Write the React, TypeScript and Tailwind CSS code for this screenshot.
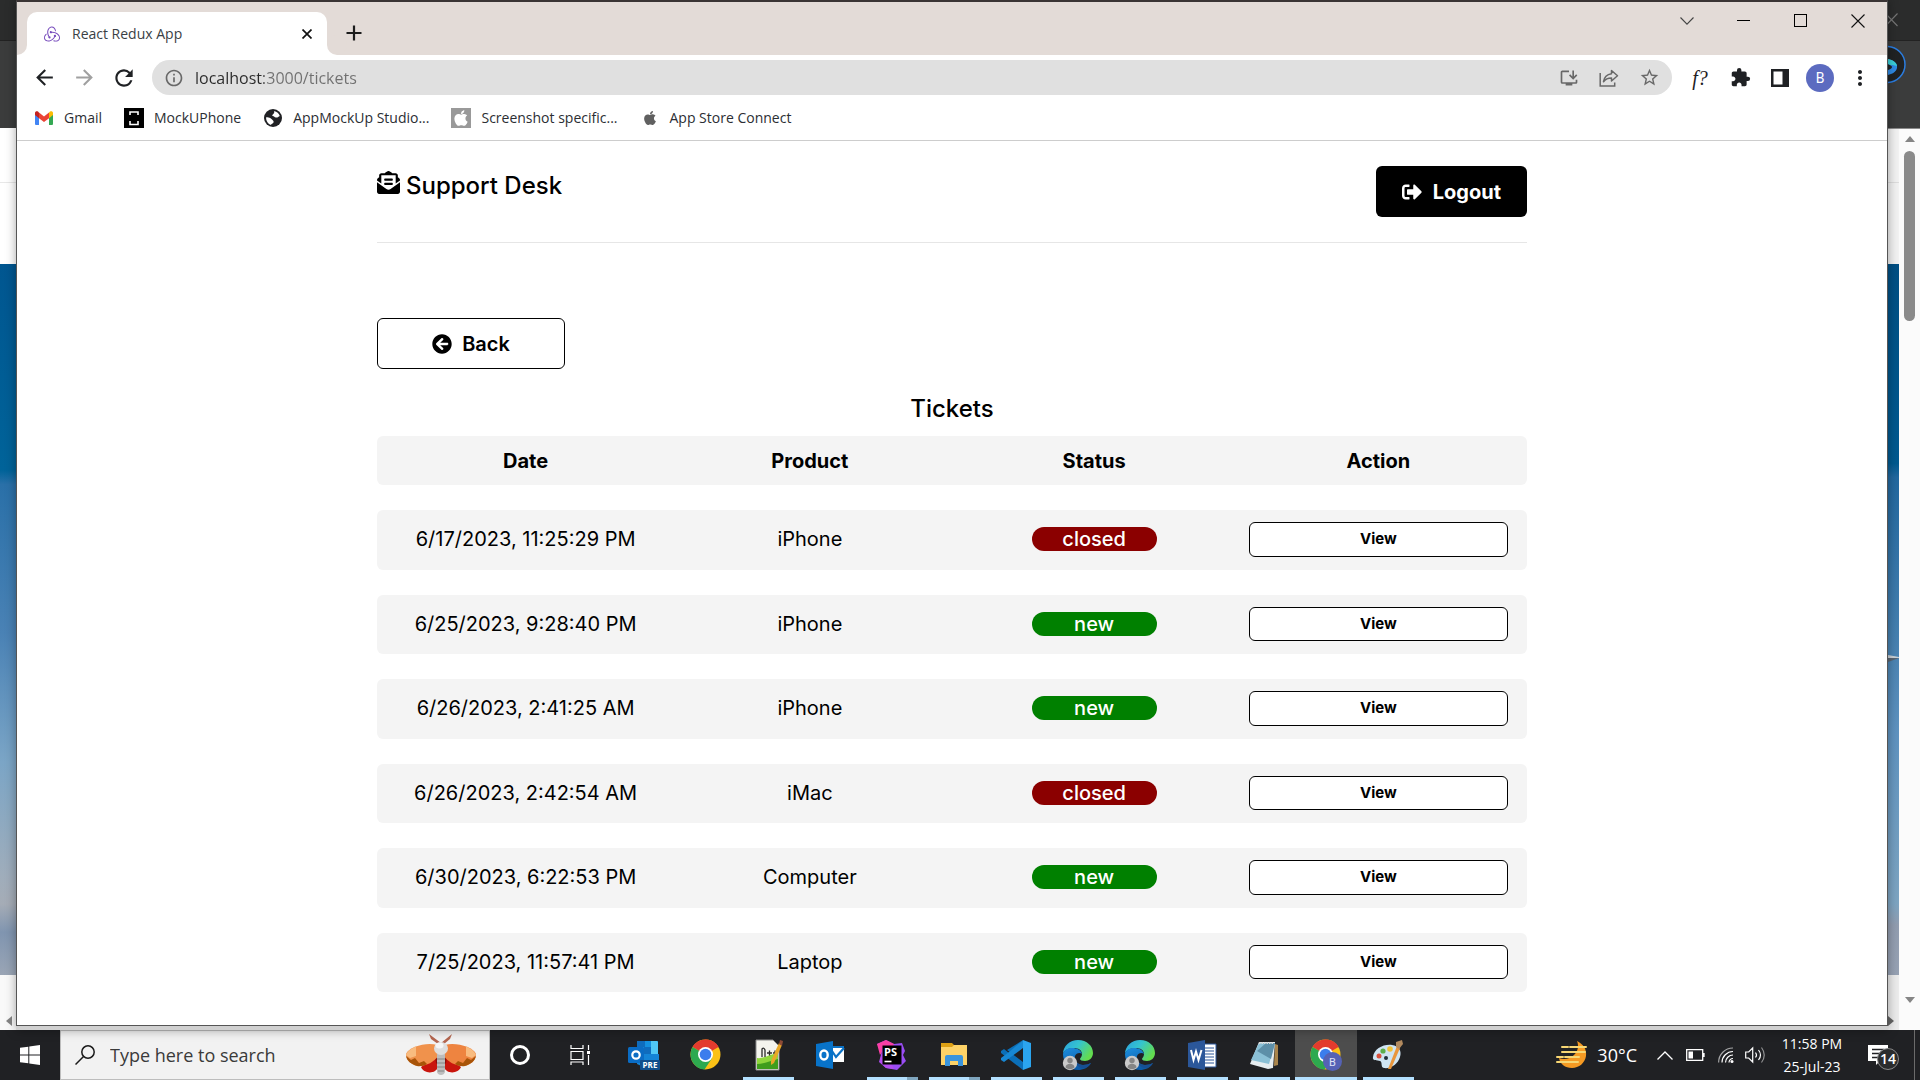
import React from "react";
import {
  FaApple,
  FaArrowCircleLeft,
  FaEnvelopeOpenText,
  FaSignOutAlt,
} from "react-icons/fa";
import {
  MdArrowBack,
  MdArrowForward,
  MdExtension,
  MdInfoOutline,
  MdInstallDesktop,
  MdMoreVert,
  MdRefresh,
  MdStarBorder,
} from "react-icons/md";
import { SiRedux } from "react-icons/si";

type Ticket = { date: string; product: string; status: "new" | "closed" };

const tickets: Ticket[] = [
  { date: "6/17/2023, 11:25:29 PM", product: "iPhone", status: "closed" },
  { date: "6/25/2023, 9:28:40 PM", product: "iPhone", status: "new" },
  { date: "6/26/2023, 2:41:25 AM", product: "iPhone", status: "new" },
  { date: "6/26/2023, 2:42:54 AM", product: "iMac", status: "closed" },
  { date: "6/30/2023, 6:22:53 PM", product: "Computer", status: "new" },
  { date: "7/25/2023, 11:57:41 PM", product: "Laptop", status: "new" },
];

/* ---------- Browser chrome ---------- */

function TabStrip() {
  return (
    <div className="flex h-[53px] items-start overflow-hidden bg-[#e3dbd7]">
      <div className="relative ml-[10px] mt-[10px] flex h-[43px] w-[300px] items-center rounded-t-[10px] bg-white pl-[17px] pr-[10px]">
        <span className="absolute -left-[10px] bottom-0 size-[10px] bg-white" />
        <span className="absolute -left-[20px] bottom-0 size-[20px] rounded-full bg-[#e3dbd7]" />
        <span className="absolute -right-[10px] bottom-0 size-[10px] bg-white" />
        <span className="absolute -right-[20px] bottom-0 size-[20px] rounded-full bg-[#e3dbd7]" />
        <SiRedux className="size-4 text-[#764abc]" />
        <span className="ml-3 flex-1 text-sm text-[#3a3f45]">React Redux App</span>
        <button aria-label="Close tab" className="flex size-5 items-center justify-center">
          <svg viewBox="0 0 10 10" className="size-[10px]" stroke="#111" strokeWidth="1.7">
            <path d="M.5.5l9 9M9.500.5l-9 9" />
          </svg>
        </button>
      </div>
      <button aria-label="New tab" className="ml-[17px] mt-[21px] flex size-5 items-center justify-center">
        <svg viewBox="0 0 16 16" className="size-4" stroke="#1c1c1c" strokeWidth="2.2">
          <path d="M8 0.500v15M.5 8h15" />
        </svg>
      </button>
      <div className="ml-auto mr-px flex h-[37px] text-black">
        <button aria-label="Search tabs" className="flex w-[57px] items-center justify-center">
          <svg viewBox="0 0 14 8" className="w-[14px]" fill="none" stroke="#444" strokeWidth="1.100">
            <path d="M.5.5L7 7.200 13.500.5" />
          </svg>
        </button>
        <button aria-label="Minimize" className="flex w-[57px] items-center justify-center">
          <span className="h-px w-[13px] bg-black" />
        </button>
        <button aria-label="Maximize" className="flex w-[57px] items-center justify-center">
          <span className="size-[13px] border border-black" />
        </button>
        <button aria-label="Close" className="flex w-[57px] items-center justify-center">
          <svg viewBox="0 0 14 14" className="size-[14px]" stroke="#111" strokeWidth="1.100">
            <path d="M.5.5l13 13M13.500.5l-13 13" />
          </svg>
        </button>
      </div>
    </div>
  );
}

function ShareIcon() {
  return (
    <svg viewBox="0 0 20 18" className="h-[18px] w-[20px]" fill="none" stroke="#686868" strokeWidth="1.500">
      <path d="M1.200 4v13h14.500v-3.500" />
      <path d="M12.500 1.500l6 5.300-6 5.200V8.900c-3.500 0-6 1-8 3.800.6-4.300 3.200-7.300 8-8z" strokeLinejoin="round" />
    </svg>
  );
}

function Toolbar() {
  const cell = "flex h-[45px] w-10 items-center justify-center";
  return (
    <div className="flex h-[45px] items-center bg-white px-[7px] text-[#1f2124]">
      <button aria-label="Back" className={cell}>
        <MdArrowBack className="size-[25px]" />
      </button>
      <button aria-label="Forward" className={cell}>
        <MdArrowForward className="size-[25px] text-[#a0a0a0]" />
      </button>
      <button aria-label="Reload" className={cell}>
        <MdRefresh className="size-[26px]" />
      </button>
      <div className="ml-2 flex h-[35px] flex-1 items-center rounded-full bg-[#e0e0e0] pl-[12px] pr-[3px] text-[#686868]">
        <MdInfoOutline className="size-5" />
        <input
          aria-label="Address"
          defaultValue="localhost:3000/tickets"
          className="ml-[11px] flex-1 bg-linear-to-r from-[#2a2a2a] from-[69px] to-[#707070] to-[69px] bg-clip-text text-base text-transparent outline-none"
        />
        <button aria-label="Install app" className={cell}>
          <MdInstallDesktop className="size-[20px]" />
        </button>
        <button aria-label="Share" className={cell}>
          <ShareIcon />
        </button>
        <button aria-label="Bookmark" className={cell}>
          <MdStarBorder className="size-[21px]" />
        </button>
      </div>
      <button className="ml-2 flex h-[45px] w-10 items-center justify-center font-['Liberation_Serif',serif] text-xl italic">
        f?
      </button>
      <button aria-label="Extensions" className={cell}>
        <MdExtension className="size-[21px]" />
      </button>
      <button aria-label="Side panel" className={cell}>
        <svg viewBox="0 0 18 18" className="size-[18px]">
          <path fillRule="evenodd" d="M0 0h18v18H0zM2.500 2.500v13h9v-13z" fill="#1f2124" />
        </svg>
      </button>
      <button aria-label="Profile" className={cell}>
        <span className="flex size-7 items-center justify-center rounded-full bg-[#5c6bc0] font-[Roboto,sans-serif] text-sm text-white">
          B
        </span>
      </button>
      <button aria-label="Menu" className={cell}>
        <MdMoreVert className="size-6" />
      </button>
    </div>
  );
}

function GmailIcon() {
  return (
    <svg viewBox="0 0 18 14" className="w-[18px]">
      <path d="M0 2v11a1 1 0 0 0 1 1h3V5z" fill="#4285f4" />
      <path d="M18 2v11a1 1 0 0 1-1 1h-3V5z" fill="#34a853" />
      <path d="M14 1.500l1-.9C16.200-.3 18 .4 18 2v2l-4 3.200z" fill="#fbbc04" />
      <path d="M4 1.500l-1-.9C1.800-.3 0 .4 0 2v2l4 3.200z" fill="#c5221f" />
      <path d="M4 1.500l5 3.900 5-3.900v5.700l-5 3.900-5-3.900z" fill="#ea4335" />
    </svg>
  );
}

function Bookmark({ icon, label }: { icon: React.ReactNode; label: string }) {
  return (
    <a href="#" className="flex items-center gap-[10px]">
      <span className="flex size-5 items-center justify-center">{icon}</span>
      <span>{label}</span>
    </a>
  );
}

function BookmarkBar() {
  return (
    <nav className="flex h-[41px] items-center gap-[22px] border-b border-[#cdcdcd] bg-white pb-1 pl-[17px] text-sm text-[#2b2e33]">
      <Bookmark icon={<GmailIcon />} label="Gmail" />
      <Bookmark
        icon={
          <svg viewBox="0 0 20 20" className="size-5">
            <path d="M0 0h20v20H0z" />
            <path d="M6 7V4h8v3M6 13v3.500h8V13" fill="none" stroke="#fff" strokeWidth="1.600" />
          </svg>
        }
        label="MockUPhone"
      />
      <Bookmark
        icon={
          <svg viewBox="0 0 18 18" className="size-[18px]">
            <circle cx="9" cy="9" r="9" fill="#202124" />
            <path d="M10 2c3 .5 5 2.500 5.800 5-1.500 1-2.300 1.800-3.800 1.500S9.500 7 8 6.500C9 5 11 4 10 2z" fill="#fff" />
            <path d="M2 8.500c2-.6 4 .2 5.500 1.500S10 12 9.500 13.500 7 14.500 7 16C4 15 2 12 2 8.500z" fill="#fff" />
          </svg>
        }
        label="AppMockUp Studio..."
      />
      <Bookmark
        icon={
          <span className="flex size-5 items-center justify-center bg-[#999]">
            <FaApple className="size-[18px] text-white" />
          </span>
        }
        label="Screenshot specific..."
      />
      <Bookmark icon={<FaApple className="size-4 text-[#606060]" />} label="App Store Connect" />
    </nav>
  );
}

/* ---------- Support Desk page ---------- */

function TicketsPage() {
  const row = "grid grid-cols-4 items-center gap-[25px] rounded-md bg-[#f4f4f4] px-[19px]";
  return (
    <div className="flex-1 bg-white px-6 pb-[33px] font-[Inter,sans-serif] text-black">
      <div className="mx-auto w-full max-w-[1150px]">
        <header className="flex items-start justify-between border-b border-[#e6e6e6] py-[25px]">
          <a href="#" className="flex items-start gap-[6px] text-2xl font-medium leading-10">
            <FaEnvelopeOpenText className="mt-[5px] size-[23px]" />
            Support Desk
          </a>
          <button className="flex h-[51px] items-center gap-[11px] rounded-md bg-black px-[26px] text-xl font-bold text-white">
            <FaSignOutAlt className="size-5" />
            Logout
          </button>
        </header>
        <main className="pt-[75px]">
          <button className="flex h-[51px] w-[188px] items-center justify-center gap-[10px] rounded-md border border-black text-xl font-semibold">
            <FaArrowCircleLeft className="size-5" />
            Back
          </button>
          <h1 className="mb-3 mt-[25px] text-center text-2xl font-medium leading-[30px]">Tickets</h1>
          <table className="block text-center text-xl">
            <thead className="block">
              <tr className={row + " h-[49px] font-semibold"}>
                <th scope="col">Date</th>
                <th scope="col">Product</th>
                <th scope="col">Status</th>
                <th scope="col">Action</th>
              </tr>
            </thead>
            <tbody className="flex flex-col gap-[25px] pt-[25px]">
              {tickets.map((t) => (
                <tr key={t.date} className={row + " pb-[13px] pt-3"}>
                  <td>{t.date}</td>
                  <td>{t.product}</td>
                  <td className="flex justify-center">
                    <span
                      className={
                        "w-[125px] rounded-full font-medium leading-6 text-white " +
                        (t.status === "new" ? "bg-[#008000]" : "bg-[#8b0000]")
                      }
                    >
                      {t.status}
                    </span>
                  </td>
                  <td>
                    <button className="block w-full rounded-md border border-black bg-white py-[5px] text-[15px] font-bold leading-normal">
                      View
                    </button>
                  </td>
                </tr>
              ))}
            </tbody>
          </table>
        </main>
      </div>
    </div>
  );
}

/* ---------- Windows behind the browser ---------- */

function LeftEdge() {
  return (
    <div className="flex w-4 flex-col bg-[#f9f9f9]">
      <div className="h-10 bg-[#2b2c2c]" />
      <div className="h-[88px] border-t border-[#222] bg-[#3b3c3c]" />
      <div className="h-[55px] border-b border-[#e8e8e8] bg-white" />
      <div className="h-[81px] bg-white" />
      <div className="flex-1 bg-[linear-gradient(#005690,#006399_29%,#2a70a8_31%,#4a82b5_52%,#7ba5c6_70%,#9fadbb_86%,#a5acb6_90%,#8095b0_94%,#9aa5b5)]" />
      <div className="flex h-[55px] items-end justify-end pb-[4px] pr-1">
        <svg viewBox="0 0 6 10" className="h-[10px] w-[6px]">
          <path d="M6 0v10L0 5z" fill="#858585" />
        </svg>
      </div>
    </div>
  );
}

function RightEdge() {
  return (
    <div className="flex w-8 flex-col bg-[#fbfbfb]">
      <div className="relative h-10 bg-[#2b2c2c]">
        <svg viewBox="0 0 12 14" className="absolute left-0 top-[13px] h-[14px] w-3" stroke="#777" strokeWidth="1.100">
          <path d="M-3 0L9.500 13M9.500.5L-3 13.500" />
        </svg>
      </div>
      <div className="h-[89px] overflow-hidden border-b border-t border-b-[#8a8a8a] border-t-[#222] bg-[#3b3c3c]">
        <svg viewBox="0 0 20 40" className="mt-[4px] h-10 w-5">
          <circle cx="-1" cy="19.500" r="18" fill="#202223" stroke="#2b7de0" strokeWidth="1.500" />
          <path d="M0 14c5 1 10 4 9 9-1 4-5 6-9 7v-5c3-1 4-2 4-3s-2-2-4-3z" fill="#2f8be6" />
          <path d="M0 14c5 1 9 4 9 7-3-1-6 0-9-2z" fill="#3ad0d8" />
        </svg>
      </div>
      <div className="flex flex-1">
        <div className="flex w-[11px] flex-col">
          <div className="h-[54px] border-b border-[#ddd] bg-[#f2f2f2]" />
          <div className="h-[81px] bg-[#f2f2f2]" />
          <div className="relative flex-1 bg-[linear-gradient(#004f84,#005a90_28%,#22689f_30%,#4580b0_52%,#5f93c0_66%,#7ea5c2_90%,#929db0_93%,#97a2b4)]">
            <svg viewBox="0 0 12 8" className="absolute left-0 top-[55%] h-2 w-full" preserveAspectRatio="none">
              <path d="M0 0l12 2v1H0z" fill="#cdd3d8" />
              <path d="M0 3h12L0 7z" fill="#5b6672" />
            </svg>
          </div>
          <div className="flex h-[55px] items-end bg-[#ececec] pb-[4px]">
            <svg viewBox="0 0 6 10" className="h-[10px] w-[6px]">
              <path d="M0 0v10l6-5z" fill="#666" />
            </svg>
          </div>
        </div>
        <div className="flex flex-1 flex-col items-center">
          <svg viewBox="0 0 10 6" className="mt-[7px] h-[6px] w-[10px]">
            <path d="M0 6h10L5 0z" fill="#858585" />
          </svg>
          <div className="mt-[9px] h-[170px] w-[11px] rounded-full bg-[#8a8a8a]" />
          <svg viewBox="0 0 10 6" className="mb-[27px] mt-auto h-[6px] w-[10px]">
            <path d="M0 0h10L5 6z" fill="#858585" />
          </svg>
        </div>
      </div>
    </div>
  );
}

/* ---------- Taskbar ---------- */

function MothArt() {
  return (
    <svg viewBox="0 0 70 42" className="h-[42px] w-[70px]">
      <path d="M35 9L23 0l2 5 7 5zM35 9l11-9-2 5-6 5z" fill="#b4664f" />
      <path d="M33 20L15 33c2 5 9 7 14 4 3-2 4-6 4-10zM37 20l18 13c-2 5-9 7-14 4-3-2-4-6-4-10z" fill="#c9150d" />
      <path d="M33 20l-4 3 1 6 3 3zM37 20l4 3-1 6-3 3z" fill="#8e0d0a" />
      <path d="M31 11C20 8 3 13 0 20c0 6 5 11 12 12 9 0 16-4 21-11z" fill="#f0924c" />
      <path d="M39 11c11-3 28 2 31 9 0 6-5 11-12 12-9 0-16-4-21-11z" fill="#ee8440" />
      <path d="M10 12.500C4 15 1 18 0 21l4 3 6-2zM60 12.500c6 2.500 9 5.500 10 8.500l-4 3-6-2z" fill="#f8bc80" />
      <path d="M0 22l5 4 4-2 4 5 5-2 3 3c-3 2-7 2.500-10 2C5 30 1 27 0 22zM70 22l-5 4-4-2-4 5-5-2-3 3c3 2 7 2.500 10 2 6-2 10-5 11-10z" fill="#a85408" />
      <path d="M31 20h8v18c-1 4-7 4-8 0z" fill="#bdbdbd" />
      <path d="M31 25h8M31 29h8M31 33h8M32 37h6" stroke="#858585" />
      <ellipse cx="35" cy="14.500" rx="7" ry="6.500" fill="#dedede" />
      <ellipse cx="33.500" cy="11.500" rx="4" ry="3" fill="#f5f5f5" />
    </svg>
  );
}

function ChromeIcon({ badge }: { badge?: boolean }) {
  return (
    <svg viewBox="0 0 32 32" className="size-8">
      <circle cx="15.500" cy="15.500" r="15" fill="#fbc116" />
      <path d="M15.500 15.500L2.500 8a15 15 0 0 1 26 0z" fill="#e33b2e" />
      <path d="M15.500 .5a15 15 0 0 1 13 7.500h-13z" fill="#e33b2e" />
      <path d="M2.500 8a15 15 0 0 0 12 22.500l7.500-11.300-6.500-3.700z" fill="#2da94f" />
      <circle cx="15.500" cy="15.500" r="7.500" fill="#fff" />
      <circle cx="15.500" cy="15.500" r="5.800" fill="#3b7ded" />
      {badge && (
        <>
          <circle cx="22.500" cy="22.500" r="9.500" fill="#5562b5" />
          <text x="22.500" y="26.500" textAnchor="middle" fontFamily="Roboto, sans-serif" fontSize="11" fill="#dfe2f5">
            B
          </text>
        </>
      )}
    </svg>
  );
}

function EdgeIcon() {
  return (
    <svg viewBox="0 0 32 32" className="size-8">
      <defs>
        <linearGradient id="edgeTop" x1="0" y1="0" x2="1" y2="0.500">
          <stop offset="0" stopColor="#2a9fe0" />
          <stop offset="0.500" stopColor="#35c4cf" />
          <stop offset="1" stopColor="#63dc4f" />
        </linearGradient>
        <linearGradient id="edgeLow" x1="0" y1="0" x2="0.500" y2="1">
          <stop offset="0" stopColor="#1c8fe0" />
          <stop offset="1" stopColor="#0c59a4" />
        </linearGradient>
      </defs>
      <path d="M1 15C1 7 8 1 16 1c9 0 15 6 15 13 0 5-4 8-8 8-3 0-5-1-5-2s2-2 2-5c0-4-4-6-8-6-5 0-10 2-11 6z" fill="url(#edgeTop)" />
      <path d="M1 15c1-4 5-6 9-6 5 0 9 2 10 6-2-2-6-1-7 2-1 5 3 9 8 9 3 0 6-1 8-2-3 5-8 7-13 7C8 31 1 24 1 15z" fill="url(#edgeLow)" />
      <path d="M13 17c-2 6 3 13 10 12 3-1 5-3 6-5-2 1-5 2-8 2-5 0-9-4-8-9z" fill="#174f92" />
      <circle cx="8" cy="24" r="7.200" fill="#cacaca" />
      <circle cx="8" cy="21.500" r="2.700" fill="#858585" />
      <path d="M3.500 28.500c0-5 9-5 9 0a7 7 0 0 1-9 0z" fill="#858585" />
    </svg>
  );
}

function OutlookPreIcon() {
  return (
    <svg viewBox="0 0 32 32" className="size-8">
      <path d="M10 2h19a1 1 0 0 1 1 1v12H9V3a1 1 0 0 1 1-1z" fill="#1490df" />
      <path d="M10 2h7v6H9V3zM16 8h7v7h-7z" fill="#0f6cbd" />
      <path d="M23 2h6l1 1v5h-7zM23 8h7v7h-7z" fill="#50c8f5" />
      <path d="M9 15h22v9l-13 5-9-4z" fill="#1484d6" />
      <rect y="8" width="16" height="16" rx="1.500" fill="#0a6cc4" />
      <circle cx="8" cy="16" r="3.700" fill="none" stroke="#fff" strokeWidth="2.200" />
      <rect x="12" y="21" width="20" height="10" rx="1" fill="#114d8c" />
      <text x="22" y="29" textAnchor="middle" fontFamily="Open Sans, sans-serif" fontWeight="700" fontSize="8" fill="#fff">
        PRE
      </text>
    </svg>
  );
}

function NotepadPlusIcon() {
  return (
    <svg viewBox="0 0 32 32" className="size-8">
      <path d="M4 1h17l6 6v24H4z" fill="#f4f4ee" stroke="#8c8c8c" />
      <path d="M5 19c7 1 13-4 21-5v16H5z" fill="#8fd63c" />
      <path d="M5 25c8 0 14-4 21-5v10H5z" fill="#3f9d1c" />
      <path d="M10 18v-8q2-2 3 1v7M15 14h5M17.500 11.500v5M21 14h4M23 11.500v5" stroke="#2b2b2b" strokeWidth="1.300" fill="none" />
      <path d="M27 4l3 2-8 18-3 2 0-4z" fill="#e8a827" />
      <path d="M28 1l3 1-1 5-3-2z" fill="#8d4b36" />
    </svg>
  );
}

function OutlookIcon() {
  return (
    <svg viewBox="0 0 32 32" className="size-8">
      <path d="M17 8h13v15H17z" fill="#fff" />
      <path d="M18 12l4 6 8-9" fill="none" stroke="#0b72c6" strokeWidth="2.200" />
      <path d="M17 7h13v2H17z" fill="#0b72c6" />
      <path d="M2 5l17-3v28L2 27z" fill="#0873c9" />
      <ellipse cx="10" cy="16" rx="3.700" ry="4.500" fill="none" stroke="#fff" strokeWidth="2.400" />
    </svg>
  );
}

function PhpStormIcon() {
  return (
    <svg viewBox="0 0 32 32" className="size-8">
      <path d="M1 5l9-4 8 4 8-1 3 8-2 4 3 6-9 9-11-2-6-6 3-8z" fill="#9a4df5" />
      <path d="M1 5l9-4 8 4-2 4-9 3-3 4z" fill="#fb3fa5" />
      <path d="M7 8L3 23l7 6 8 1z" fill="#b14cf0" />
      <rect x="6.500" y="6.500" width="19" height="19" />
      <text x="8" y="17" fontFamily="Open Sans, sans-serif" fontWeight="700" fontSize="11" fill="#fff">
        PS
      </text>
      <path d="M8.500 22.500h7" stroke="#fff" strokeWidth="1.600" />
    </svg>
  );
}

function ExplorerIcon() {
  return (
    <svg viewBox="0 0 32 32" className="size-8">
      <path d="M3 4h11l2 2h12v5H3z" fill="#dda014" />
      <path d="M3 8h11l2-2h13v20H3z" fill="#fdd267" />
      <path d="M7 27V18q0-2 2-2h14q2 0 2 2v9h-5v-5h-8v5z" fill="#3a94dc" />
    </svg>
  );
}

function VsCodeIcon() {
  return (
    <svg viewBox="0 0 32 32" className="size-8">
      <path d="M23 1L9 14 4 10l-3 2v2l22 17v-8L7 11z" fill="#0b6fb8" />
      <path d="M23 1v8L4 23l-3-2v-2l8-6z" fill="#1788d4" />
      <path d="M23 1l8 3v24l-8 3z" fill="#2ba5ef" />
    </svg>
  );
}

function WordIcon() {
  return (
    <svg viewBox="0 0 32 32" className="size-8">
      <path d="M17 5h13v23H17z" fill="#fff" stroke="#2b579a" />
      <path d="M19 9h9M19 12h9M19 15h9M19 18h9M19 21h9M19 24h9" stroke="#2b579a" strokeWidth="1.200" />
      <path d="M2 4l17-3v30L2 28z" fill="#2b579a" />
      <path d="M5 11l2.500 10L10 12.500 12.500 21 15.500 11" fill="none" stroke="#fff" strokeWidth="2" />
    </svg>
  );
}

function NotepadIcon() {
  return (
    <svg viewBox="0 0 32 32" className="size-8">
      <path d="M27 5l3 1v20l-4 1z" fill="#a9844b" />
      <path d="M11 3h16l-2 26-5 1-18-5z" fill="#e6edf0" />
      <path d="M11 4h16L21 25 3 21z" fill="#8ac0d6" />
      <path d="M18 4h9l-4 16L9 12z" fill="#5d8fa8" />
      <path d="M11 4h15" stroke="#d8d8d8" strokeWidth="2" strokeDasharray="1.500 1" />
    </svg>
  );
}

function PaintIcon() {
  return (
    <svg viewBox="0 0 32 32" className="size-8">
      <path d="M1 18C2 10 11 5 20 6c7 1 10 6 8 12-2 7-9 12-16 11-4-1-1-6-4-7S0 22 1 18z" fill="#cfe4f2" />
      <circle cx="7" cy="17" r="2.500" fill="#d9503c" />
      <circle cx="11" cy="12" r="2.600" fill="#5cae4c" />
      <circle cx="18" cy="10" r="2.800" fill="#f1c33a" />
      <circle cx="14" cy="19" r="2" fill="#20303c" />
      <path d="M25 7l3 2-9 21-3 0z" fill="#e9963c" />
      <path d="M24 3l6-2 1 4-4 5-3-2z" fill="#b28a5e" />
    </svg>
  );
}

type App = { name: string; icon: React.ReactNode; state?: "open" | "stacked" | "active" };

const apps: App[] = [
  { name: "Outlook preview", icon: <OutlookPreIcon /> },
  { name: "Chrome", icon: <ChromeIcon /> },
  { name: "Notepad++", icon: <NotepadPlusIcon />, state: "open" },
  { name: "Outlook", icon: <OutlookIcon /> },
  { name: "PhpStorm", icon: <PhpStormIcon />, state: "stacked" },
  { name: "File Explorer", icon: <ExplorerIcon />, state: "stacked" },
  { name: "Visual Studio Code", icon: <VsCodeIcon />, state: "open" },
  { name: "Edge", icon: <EdgeIcon />, state: "open" },
  { name: "Edge profile", icon: <EdgeIcon />, state: "open" },
  { name: "Word", icon: <WordIcon />, state: "open" },
  { name: "Notepad", icon: <NotepadIcon />, state: "open" },
  { name: "Chrome profile", icon: <ChromeIcon badge />, state: "active" },
  { name: "Paint", icon: <PaintIcon />, state: "open" },
];

function AppButton({ app }: { app: App }) {
  return (
    <button
      aria-label={app.name}
      className={"flex w-[62px] flex-col items-center " + (app.state === "active" ? "bg-[#4d4d4d]" : "")}
    >
      <span className="flex h-[47px] items-center pt-[3px]">{app.icon}</span>
      {app.state === "open" && <span className="h-[3px] w-[51px] bg-[#b3e0ff]" />}
      {app.state === "active" && <span className="h-[3px] w-full bg-[#b3e0ff]" />}
      {app.state === "stacked" && (
        <span className="flex h-[3px] w-[51px]">
          <span className="flex-1 bg-[#b3e0ff]" />
          <span className="w-[11px] bg-[#7fa6bf]" />
        </span>
      )}
    </button>
  );
}

function WeatherIcon() {
  return (
    <svg viewBox="0 0 32 28" className="h-7 w-8">
      <path d="M21 0c6 3 10 8 9 15-1 7-7 12-14 12S4 23 3 17c5 2 11 1 15-3 4-4 5-9 3-14z" fill="#f59a23" />
      <path d="M6 6h6M14 6h16M6 11h23M1 16h6M9 16h14M1 21h21" stroke="#f7d774" strokeWidth="2" strokeLinecap="round" />
    </svg>
  );
}

function Taskbar() {
  return (
    <footer className="flex h-[50px] bg-[#202124] text-white">
      <button aria-label="Start" className="flex w-[60px] items-center justify-center">
        <svg viewBox="0 0 20 20" className="size-5" fill="#fff">
          <path d="M0 2.800L8.300 1.700v7.800H0zM9.300 1.500L20 0v9.500H9.300zM0 10.500h8.300v7.800L0 17.200zM9.300 10.500H20V20L9.300 18.500z" />
        </svg>
      </button>
      <label className="flex w-[430px] items-center border border-[#bdbdbd] bg-[#f2f2f2] pl-[14px] pr-[13px]">
        <svg viewBox="0 0 20 20" className="size-5" fill="none" stroke="#1a1a1a" strokeWidth="1.500">
          <circle cx="13" cy="7" r="6.200" />
          <path d="M8.500 11.500L.5 19.500" />
        </svg>
        <input
          aria-label="Search"
          placeholder="Type here to search"
          className="ml-[15px] min-w-0 flex-1 bg-transparent text-lg text-[#333] outline-none placeholder:text-[#3a3a3a]"
        />
        <MothArt />
      </label>
      <button aria-label="Cortana" className="flex w-[60px] items-center justify-center">
        <span className="size-5 rounded-full border-[3px] border-white" />
      </button>
      <button aria-label="Task view" className="flex w-[63px] items-center justify-center pr-1">
        <svg viewBox="0 0 20 20" className="size-5" fill="none" stroke="#fff" strokeWidth="1.200">
          <path d="M1 0v3.500h12V0M1 6.500h12v8H1zM1 20v-3h12v3M18.500 0v5M18.500 10v10" />
          <path d="M17 6h3v3h-3z" fill="#fff" stroke="none" />
        </svg>
      </button>
      {apps.map((app) => (
        <AppButton key={app.name} app={app} />
      ))}
      <div className="ml-auto flex items-center">
        <button className="flex items-center gap-[9px] text-lg">
          <WeatherIcon />
          30°C
        </button>
        <button aria-label="Show hidden icons" className="ml-5 flex w-4 justify-center">
          <svg viewBox="0 0 16 9" className="w-4" fill="none" stroke="#fff" strokeWidth="1.300">
            <path d="M.5 8.500L8 1l7.500 7.500" />
          </svg>
        </button>
        <button aria-label="Battery" className="ml-[13px]">
          <svg viewBox="0 0 19 12" className="w-[19px]" fill="none" stroke="#fff" strokeWidth="1.300">
            <path d="M.7.7h16v10.600H.7zM18 4v4" />
            <path d="M2.500 2.500h4.500v7H2.500z" fill="#fff" stroke="none" />
          </svg>
        </button>
        <button aria-label="Network" className="ml-[13px]">
          <svg viewBox="0 0 16 16" className="size-4" fill="none" stroke="#fff" strokeWidth="1.200">
            <path d="M.6 15.500C.6 7.500 7 1 15 1" opacity=".6" />
            <path d="M4 15.500C4 9.500 9 4.500 15 4.500M7.500 15.500C7.500 11.500 11 8 15 8M11 15.500c0-2.200 1.800-4 4-4" />
            <circle cx="14" cy="14.500" r="1.500" fill="#fff" stroke="none" />
          </svg>
        </button>
        <button aria-label="Volume" className="ml-[11px]">
          <svg viewBox="0 0 20 18" className="w-5" fill="none" stroke="#fff" strokeWidth="1.200">
            <path d="M.7 6h3l4-4v14l-4-4h-3zM10.500 6.500q2 2.500 0 5M13.500 4q4 5 0 10" />
            <path d="M16.500 1.500q5.500 7.500 0 15" opacity=".5" />
          </svg>
        </button>
        <button className="ml-[9px] flex w-[76px] flex-col items-center text-sm leading-[23px]">
          <span>11:58 PM</span>
          <span>25-Jul-23</span>
        </button>
        <button aria-label="Notifications" className="relative ml-[18px] h-[30px] w-[31px]">
          <svg viewBox="0 0 20 20" className="size-5">
            <path d="M0 0h20v16h-8l-4 4v-4H0z" fill="#fff" />
            <path d="M4 4.500h12M4 8.500h12M4 12.500h8" stroke="#202124" strokeWidth="1.300" />
          </svg>
          <span className="absolute bottom-0 right-0 flex size-[22px] items-center justify-center rounded-full border border-[#888] bg-[#2b2c2d] text-sm font-semibold">
            14
          </span>
        </button>
        <span className="ml-[15px] mr-[5px] h-[50px] w-px bg-[#6b6b6b]" />
      </div>
    </footer>
  );
}

export default function App() {
  return (
    <div className="flex min-h-screen flex-col font-['Open_Sans',sans-serif]">
      <div className="flex flex-1">
        <LeftEdge />
        <div className="z-10 flex flex-1 flex-col bg-[#d0d0d0] pb-1 shadow-[0_0_10px_rgba(0,0,0,0.35)]">
          <div className="flex flex-1 flex-col border border-t-2 border-[#555] border-t-[#3a3434]">
            <TabStrip />
            <Toolbar />
            <BookmarkBar />
            <TicketsPage />
          </div>
        </div>
        <RightEdge />
      </div>
      <Taskbar />
    </div>
  );
}
